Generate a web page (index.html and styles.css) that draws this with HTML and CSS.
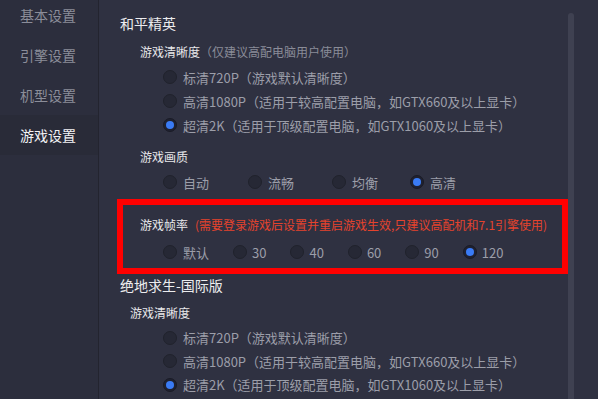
FILE: index.html
```html
<!DOCTYPE html>
<html lang="zh-CN">
<head>
    <meta charset="UTF-8">
    <meta name="viewport" content="width=device-width, initial-scale=1.0">
    <title>游戏设置</title>
<link rel="stylesheet" href="styles.css">
</head>
<body>
    <div class="window">

        <div class="side_menu">
            <a href="#" class="menu_item">基本设置</a>
            <a href="#" class="menu_item">引擎设置</a>
            <a href="#" class="menu_item">机型设置</a>
            <a href="#" class="menu_item -on">游戏设置</a>
        </div>

        <div class="main_block">
            <div class="scroll_content">

                <div class="game_title">和平精英</div>

                <div class="setting_group">
                    <div class="group_title">游戏清晰度<span class="hint">（仅建议高配电脑用户使用）</span></div>
                    <div class="option_list">
                        <label class="option"><span class="radio"></span>标清720P（游戏默认清晰度）</label>
                        <label class="option"><span class="radio"></span>高清1080P（适用于较高配置电脑，如GTX660及以上显卡）</label>
                        <label class="option"><span class="radio -checked"></span>超清2K（适用于顶级配置电脑，如GTX1060及以上显卡）</label>
                    </div>
                </div>

                <div class="setting_group">
                    <div class="group_title">游戏画质</div>
                    <div class="option_row quality_row">
                        <label class="option"><span class="radio"></span>自动</label>
                        <label class="option"><span class="radio"></span>流畅</label>
                        <label class="option"><span class="radio"></span>均衡</label>
                        <label class="option"><span class="radio -checked"></span>高清</label>
                    </div>
                </div>

                <div class="setting_group mark_box">
                    <div class="group_title">游戏帧率<span class="warn">(需要登录游戏后设置并重启游戏生效,只建议高配机和7.1引擎使用)</span></div>
                    <div class="option_row fps_row">
                        <label class="option"><span class="radio"></span>默认</label>
                        <label class="option"><span class="radio"></span>30</label>
                        <label class="option"><span class="radio"></span>40</label>
                        <label class="option"><span class="radio"></span>60</label>
                        <label class="option"><span class="radio"></span>90</label>
                        <label class="option"><span class="radio -checked"></span>120</label>
                    </div>
                </div>

                <div class="game_title">绝地求生-国际版</div>

                <div class="setting_group -narrow">
                    <div class="group_title">游戏清晰度</div>
                    <div class="option_list">
                        <label class="option"><span class="radio"></span>标清720P（游戏默认清晰度）</label>
                        <label class="option"><span class="radio"></span>高清1080P（适用于较高配置电脑，如GTX660及以上显卡）</label>
                        <label class="option"><span class="radio -checked"></span>超清2K（适用于顶级配置电脑，如GTX1060及以上显卡）</label>
                    </div>
                </div>

            </div>

            <div class="scroll_track">
                <div class="scroll_thumb"></div>
            </div>
        </div>

    </div>
</body>
</html>
```

FILE: styles.css
```css
*{
  box-sizing: border-box;
}
html, body{
  margin: 0;
  height: 100%;
  overflow: hidden;
}
body{
  background-color: #2f3141;
  font-family: "Noto Sans CJK SC", "Noto Sans", sans-serif;
  color: #e6e6e8;
}
div.window{
  display: flex;
  height: 399px;
}

/* 左邊選單 */
div.side_menu{
  flex-basis: 99px;
  flex-shrink: 0;
  background-color: #2c2e3d;
  border-right: 1px solid #23242f;
  padding-top: 0;
  margin-top: -5px;
  display: flex;
  flex-direction: column;
}
div.side_menu a.menu_item{
  display: block;
  height: 40px;
  line-height: 40px;
  padding-left: 20px;
  font-size: 14px;
  color: #8b8d99;
  text-decoration: none;
}
div.side_menu a.-on{
  background-color: #292b38;
  color: #f2f2f4;
}

/* 右邊內容 */
div.main_block{
  flex-grow: 1;
  display: flex;
}
div.scroll_content{
  flex-grow: 1;
  padding: 13px 0 0 21px;
}
div.scroll_track{
  flex-basis: 30px;
  flex-shrink: 0;
  padding-top: 13px;
}
div.scroll_thumb{
  width: 6px;
  height: 100%;
  border-radius: 3px 3px 0 0;
  background-color: #3f4151;
}

div.game_title{
  font-size: 14px;
  line-height: 20px;
  color: #ececee;
}
div.setting_group{
  margin-left: 20px;
  padding-top: 9px;
}
div.setting_group + div.setting_group{
  padding-top: 10px;
}
div.setting_group.-narrow{
  margin-left: 10px;
  padding-top: 8px;
}
div.group_title{
  font-size: 12px;
  line-height: 20px;
  color: #e8e8ea;
  margin-bottom: 3px;
}
span.hint{
  color: #8a8c98;
}
span.warn{
  color: #e5432d;
  margin-left: 7px;
}

div.option_list{
  margin-left: 23px;
}
div.setting_group.-narrow div.option_list{
  margin-left: 33px;
}
label.option{
  display: flex;
  align-items: center;
  height: 24px;
  font-size: 13px;
  color: #9c9ea9;
  white-space: nowrap;
}
div.setting_group.-narrow label.option{
  height: 23.5px;
}
span.radio{
  width: 14px;
  height: 14px;
  border-radius: 50%;
  background-color: #262835;
  border: 1px solid #20222c;
  margin-right: 6px;
  flex-shrink: 0;
  position: relative;
}
span.radio.-checked{
  background-color: #1f2130;
  border-color: #1a1b26;
}
span.radio.-checked::after{
  content: "";
  position: absolute;
  left: 2px;
  top: 2px;
  width: 8px;
  height: 8px;
  border-radius: 50%;
  background-color: #3a7bf5;
}

div.option_row{
  margin-left: 23px;
  display: flex;
}
div.quality_row{
  display: grid;
  grid-template-columns: 85px 84px 78px auto;
  margin-top: 1px;
}
div.fps_row{
  gap: 24px;
}
div.fps_row label.option + label.option span.radio{
  margin-right: 5px;
}

/* 紅框 */
div.mark_box.setting_group{
  margin: 5px 0 0 -3px;
  padding: 6px 0 4px 17px;
  border: 6px solid #ff0000;
}
div.mark_box div.group_title{
  margin-bottom: 5px;
}
div.mark_box div.option_row{
  margin-left: 23px;
}
div.mark_box + div.game_title{
  margin-top: 1px;
}
```
